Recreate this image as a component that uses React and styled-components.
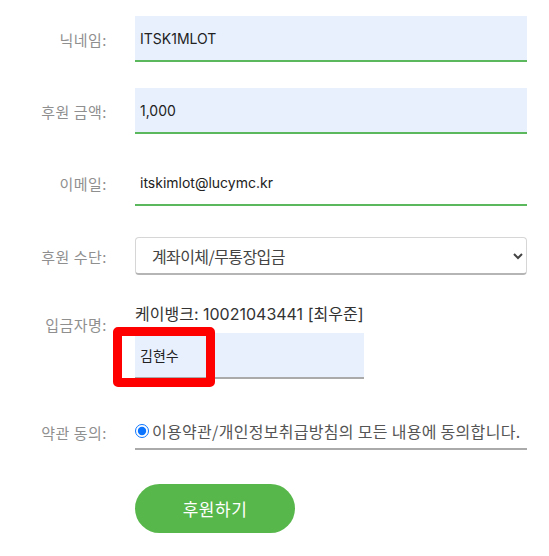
import React from 'react';
import styled, { createGlobalStyle } from 'styled-components';

const Global = createGlobalStyle`
  body {
    margin: 0;
    background: #fff;
    font-family: Inter, "Noto Sans CJK KR", sans-serif;
  }
`;

const Form = styled.form`
  padding-top: 16px;
`;

const Row = styled.div`
  display: grid;
  grid-template-columns: 107px 392px;
  column-gap: 28px;
  align-items: ${props => props.$align || 'center'};
  margin-top: ${props => props.$top || 0}px;
`;

const Label = styled.label`
  text-align: right;
  font-family: "Noto Sans CJK KR", sans-serif;
  font-size: 15px;
  letter-spacing: 0.5px;
  color: #8f8f8f;
  padding-top: ${props => props.$pad || 0}px;
`;

const Input = styled.input`
  box-sizing: border-box;
  width: ${props => props.$width || 392}px;
  height: 46px;
  border: none;
  border-bottom: 2px solid ${props => props.$line || '#5cb85c'};
  background: ${props => (props.$filled ? '#e8f0fe' : '#fff')};
  padding: 0 5px;
  font-family: Inter, "Noto Sans CJK KR", sans-serif;
  font-size: 14px;
  color: #222;
  outline: none;
`;

const Select = styled.select`
  box-sizing: border-box;
  width: 392px;
  height: 38px;
  border: 1px solid #d6d6d6;
  border-bottom: 2px solid #b5b5b5;
  border-radius: 4px;
  background: #fff;
  padding: 0 12px;
  font-family: "Noto Sans CJK KR", sans-serif;
  font-size: 16px;
  letter-spacing: -0.6px;
  color: #444;
`;

const Field = styled.div`
  display: flex;
  flex-direction: column;
  gap: 8px;
`;

const BankInfo = styled.div`
  font-family: Inter, "Noto Sans CJK KR", sans-serif;
  font-size: 16px;
  color: #333;
`;

const NameBox = styled.div`
  position: relative;
  width: 229px;
`;

const Highlight = styled.div`
  position: absolute;
  left: -22px;
  top: -6px;
  width: 102px;
  height: 60px;
  box-sizing: border-box;
  border: 9px solid #ff0000;
  border-radius: 5px;
  pointer-events: none;
`;

const Terms = styled.label`
  display: flex;
  align-items: center;
  gap: 3px;
  height: 34px;
  border-bottom: 2px solid #aaa;
  font-family: "Noto Sans CJK KR", sans-serif;
  font-size: 16px;
  letter-spacing: 0.3px;
  color: #555;
  white-space: nowrap;
`;

const Radio = styled.input`
  margin: 0;
  width: 14px;
  height: 14px;
  accent-color: #0b74ff;
`;

const Submit = styled.button`
  width: 160px;
  height: 49px;
  border: none;
  border-radius: 25px;
  background: #58b74b;
  color: #fff;
  font-family: "Noto Sans CJK KR", sans-serif;
  font-size: 17px;
  letter-spacing: 0.5px;
  cursor: pointer;
`;

export default () => (
  <>
    <Global />
    <Form>
      <Row>
        <Label>닉네임:</Label>
        <Input $filled defaultValue="ITSK1MLOT" />
      </Row>
      <Row $top={26}>
        <Label>후원 금액:</Label>
        <Input $filled defaultValue="1,000" />
      </Row>
      <Row $top={26}>
        <Label>이메일:</Label>
        <Input defaultValue="itskimlot@lucymc.kr" />
      </Row>
      <Row $top={31}>
        <Label>후원 수단:</Label>
        <Select defaultValue="bank">
          <option value="bank">계좌이체/무통장입금</option>
        </Select>
      </Row>
      <Row $top={26} $align="start">
        <Label $pad={13}>입금자명:</Label>
        <Field>
          <BankInfo>케이뱅크: 10021043441 [최우준]</BankInfo>
          <NameBox>
            <Input $filled $width={229} $line="#aaa" defaultValue="김현수" />
            <Highlight />
          </NameBox>
        </Field>
      </Row>
      <Row $top={35}>
        <Label>약관 동의:</Label>
        <Terms>
          <Radio type="radio" defaultChecked />
          이용약관/개인정보취급방침의 모든 내용에 동의합니다.
        </Terms>
      </Row>
      <Row $top={34}>
        <span />
        <div>
          <Submit type="button">후원하기</Submit>
        </div>
      </Row>
    </Form>
  </>
);
